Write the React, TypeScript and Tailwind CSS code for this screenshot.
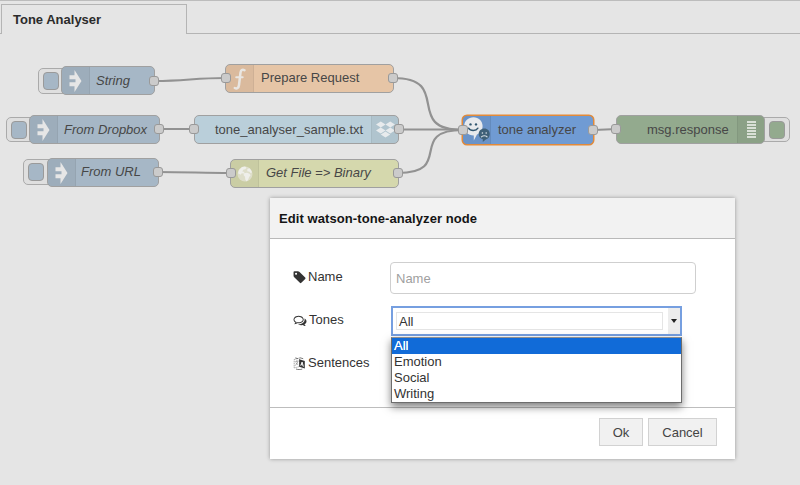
import React from "react";
import { FaDropbox } from "react-icons/fa";

type Box = { x: number; y: number; w: number; h: number };

function Port({ x, y }: { x: number; y: number }) {
  return (
    <div
      className="absolute size-[10px] rounded-[3px] border border-[#999999] bg-[#cbcbcb]"
      style={{ left: x - 5, top: y - 5 }}
    />
  );
}

function NodeButton({ x, y, w, h, color, right }: Box & { color: string; right?: boolean }) {
  return (
    <div
      className={`absolute flex items-center rounded-[5px] border border-[#aaaaaa] bg-[#dfdfdf] ${right ? "justify-end pr-1" : "justify-start pl-[3.5px]"}`}
      style={{ left: x, top: y, width: w, height: h }}
    >
      <div className={`h-[18px] w-4 rounded-[4px] border border-[#9a9a9a] ${color}`} />
    </div>
  );
}

function FlowNode({
  x, y, w, h, color, border = "border-[#a0a0a0]", icon, iconRight, label, labelX, labelClass = "h-[27px]",
}: Box & {
  color: string;
  border?: string;
  icon: React.ReactNode;
  iconRight?: boolean;
  label: string;
  labelX: number;
  labelClass?: string;
}) {
  return (
    <div
      className={`absolute flex overflow-hidden rounded-[5px] border ${color} ${border} ${iconRight ? "flex-row-reverse" : ""}`}
      style={{ left: x, top: y, width: w, height: h }}
    >
      <div
        className={`flex h-full shrink-0 items-center justify-center bg-black/5 ${iconRight ? "w-[27px] border-l" : "w-7 border-r"} border-black/5`}
      >
        {icon}
      </div>
      <span
        className={`absolute top-0 flex items-center whitespace-nowrap text-[13px] text-[#474747] ${labelClass}`}
        style={{ left: labelX - x - 1 }}
      >
        {label}
      </span>
    </div>
  );
}

function InjectIcon() {
  return (
    <svg width="13" height="22" viewBox="0 0 13 22" fill="#e6e6e6">
      <path d="M5.500 0 12.500 11 5.500 22V16.300H.5V12.300H6.500V9.300H.5V5.300H5.500z" />
    </svg>
  );
}

function FunctionIcon() {
  return (
    <svg width="14" height="22" viewBox="0 0 14 22" fill="none" stroke="#e9e6e2" strokeWidth="2.5" strokeLinecap="round">
      <path d="M11.500 2.200C9.400.9 7.900 2 7.500 4.600L6 17c-.4 3-2 4.100-4.200 3" />
      <path d="M3.200 9.300h6.500" strokeWidth="2" />
    </svg>
  );
}

function GlobeIcon() {
  return (
    <svg width="16" height="16" viewBox="0 0 16 16">
      <circle cx="8" cy="8" r="7.5" fill="#dedeca" />
      <path d="m2 4 3-3 3-.5 1.6 1.2-1.4 1.6-2 .4-.8 1.8 2 .4-.5 1.5-2.2-.2-1 1.6L1 7.2zM7 7.2l3-.5 2.5 1.1 1.1 1.5-1.4 1.6-1 2.5-1.5 2-1.4-2-.3-2.6L6.5 9zM10.4 3l2-.7 1.7 2 .9 2.3-1.5.5-1-1.4-2.3-.5z" fill="#efefea" />
    </svg>
  );
}

function ToneIcon() {
  return (
    <svg width="27" height="28" viewBox="0 0 27 28">
      <path d="M10.500 1.200c5.100 0 9.100 3.700 9.100 8.800 0 4.200-2.600 7.200-5.600 8.500L10.800 24.600v-5C5 19.500 1.200 15.200 1.200 10c0-5.100 4.200-8.800 9.300-8.800z" fill="#e8eaed" />
      <circle cx="7.500" cy="8.400" r="1.200" fill="#31566f" />
      <circle cx="13" cy="8.400" r="1.200" fill="#31566f" />
      <path d="M5.600 12.200c1.700 3 7.600 3 9.300 0" fill="none" stroke="#31566f" strokeWidth="1.400" strokeLinecap="round" />
      <path d="M21.300 12.500c3.200 0 5.500 2.300 5.500 5.400 0 2.900-1.800 5-4 5.500l-3 2.700v-2.900c-2.600-.7-4.100-2.800-4.100-5.300 0-3.100 2.400-5.400 5.600-5.400z" fill="#3f6078" />
      <circle cx="19.400" cy="17" r=".8" fill="#dce3e8" />
      <circle cx="23.200" cy="17" r=".8" fill="#dce3e8" />
      <path d="M18.200 21.300c1-2.100 5.200-2.100 6.200 0" fill="none" stroke="#dce3e8" strokeWidth="1.200" />
    </svg>
  );
}

function DebugIcon() {
  return (
    <div className="flex flex-col gap-px">
      <div className="h-[2px] w-[9px] bg-[#d9e0d6]" />
      <div className="h-[2px] w-[9px] bg-[#d9e0d6]" />
      <div className="h-[2px] w-[9px] bg-[#d9e0d6]" />
      <div className="h-[2px] w-[9px] bg-[#d9e0d6]" />
      <div className="h-[2px] w-[9px] bg-[#d9e0d6]" />
      <div className="h-[2px] w-[9px] bg-[#d9e0d6]" />
    </div>
  );
}

function TagIcon() {
  return (
    <svg width="13" height="13" viewBox="60 100 1650 1650" fill="#333">
      <path d="M576 448q0-53-37.500-90.500t-90.500-37.500-90.500 37.500-37.500 90.500 37.500 90.500 90.500 37.500 90.500-37.500 37.500-90.500zm1067 576q0 53-37 90l-491 492q-39 37-91 37-53 0-90-37l-715-716q-38-37-64.500-101t-26.500-117v-416q0-52 38-90t90-38h416q53 0 117 26.500t102 64.500l715 714q37 39 37 91z" />
    </svg>
  );
}

function CommentsIcon() {
  return (
    <svg width="14" height="13" viewBox="0 0 1792 1792" fill="#333">
      <path d="M704 384q-153 0-286 52t-211.500 141-78.500 191q0 82 53 158t149 132l97 56-35 84q34-20 62-39l44-31 53 10q78 14 153 14 153 0 286-52t211.500-141 78.500-191-78.500-191-211.500-141-286-52zm0-128q191 0 353.500 68.500t256.500 186.500 94 257-94 257-256.500 186.500-353.500 68.500q-86 0-176-16-124 88-278 128-36 9-86 16h-3q-11 0-20.500-8t-11.500-21q-1-3-1-6.500t.5-6.500 2-6l2.500-5 3.500-5.500 4-5 4.500-5 4-4.500q5-6 23-25t26-29.500 22.500-29 25-38.500 20.500-44q-124-72-195-177t-71-224q0-139 94-257t256.500-186.500 353.500-68.500zm822 1169q10 24 20.500 44t25 38.500 22.500 29 26 29.500 23 25q1 1 4 4.500t4.500 5 4 5 3.500 5.500l2.500 5 2 6 .5 6.500-1 6.500q-3 14-13 22t-22 7q-50-7-86-16-154-40-278-128-90 16-176 16-271 0-472-132 58 4 88 4 161 0 309-45t264-129q125-92 192-212t67-254q0-77-23-152 129 71 204 178t75 230q0 120-71 224.500t-195 176.500z" />
    </svg>
  );
}

function LanguageIcon() {
  return (
    <svg width="13" height="13" viewBox="0 0 12 13" fill="none">
      <path d="M.7 2.500 6 1v8.500L.7 11z" stroke="#888" strokeWidth=".7" strokeDasharray="1.500 .6" />
      <path d="M1.700 4.800 5 3.900M3.300 3.300v1M4.500 4.500 2 8.500M2.300 5.800l2.400 2" stroke="#888" strokeWidth=".7" />
      <path d="m5.700 2.200 5.600 1.700v7.600l-5.600-1.800z" fill="#333" />
      <path d="M7.200 8.700 8.600 5l1.300 4.700M7.600 7.500l1.900.6" stroke="#fff" strokeWidth=".9" />
      <path d="M1.800.9 4.500 1.700M6.200.7l3.500 1M2.500 12c2 .8 4.200.8 6.300 0" stroke="#555" strokeWidth=".8" />
    </svg>
  );
}

function Canvas() {
  return (
    <div className="relative min-h-0 flex-1">
      {/* Node coordinates are measured from the top of the editor window */}
      <div className="absolute -top-[34px] left-0 h-[485px] w-[800px]">
        <svg className="absolute inset-0" width="800" height="485" fill="none" stroke="#929292" strokeWidth="2.2">
          <path d="M155 81C185 81 195 78 225 78" />
          <path d="M160 129H194" />
          <path d="M158 172C185 172 205 173 230 173" />
          <path d="M393 78C454 78 402 130 463 130" />
          <path d="M399 129.500H463" />
          <path d="M398 173C455 173 406 130 463 130" />
          <path d="M594 130L617 129" />
        </svg>

        <NodeButton x={38} y={68} w={40} h={26} color="bg-[#a6b7c6]" />
        <FlowNode x={61} y={66} w={94} h={29} color="bg-[#a6b7c6]" icon={<InjectIcon />} label="String" labelX={96} labelClass="h-[27px] italic" />
        <Port x={154} y={81} />

        <NodeButton x={6} y={117} w={40} h={25} color="bg-[#a6b7c6]" />
        <FlowNode x={29} y={115} w={131} h={29} color="bg-[#a6b7c6]" icon={<InjectIcon />} label="From Dropbox" labelX={64} labelClass="h-[27px] italic" />
        <Port x={159} y={129} />

        <NodeButton x={23} y={159} w={40} h={26} color="bg-[#a6b7c6]" />
        <FlowNode x={47} y={158} w={112} h={29} color="bg-[#a6b7c6]" icon={<InjectIcon />} label="From URL" labelX={81} labelClass="h-[25px] italic" />
        <Port x={158} y={172} />

        <FlowNode x={225} y={64} w={169} h={29} color="bg-[#e6c5a6]" icon={<FunctionIcon />} label="Prepare Request" labelX={261} labelClass="h-[25px]" />
        <Port x={226} y={78} />
        <Port x={393} y={78} />

        <FlowNode x={194} y={115} w={205} h={29} color="bg-[#bacfda]" icon={<FaDropbox size={19} color="#e8ebed" />} iconRight label="tone_analyser_sample.txt" labelX={215} />
        <Port x={194} y={129} />
        <Port x={399} y={129} />

        <FlowNode x={230} y={159} w={169} h={29} color="bg-[#d5d8ad]" icon={<GlobeIcon />} label="Get File => Binary" labelX={266} labelClass="h-[25px] italic" />
        <Port x={231} y={173} />
        <Port x={398} y={173} />

        <FlowNode x={462} y={115} w={132} h={30} color="bg-[#709bd3]" border="border-[#e38a38] shadow-[0_0_0_0.5px_#e38a38]" icon={<ToneIcon />} label="tone analyzer" labelX={498} />
        <Port x={463} y={130} />
        <Port x={593} y={130} />

        <NodeButton x={749} y={117} w={41} h={25} color="bg-[#93aa8e]" right />
        <FlowNode x={616} y={115} w={149} h={29} color="bg-[#93aa8e]" icon={<DebugIcon />} iconRight label="msg.response" labelX={647} />
        <Port x={616} y={129} />
      </div>
    </div>
  );
}

function Field({ icon, label, children }: { icon: React.ReactNode; label: string; children?: React.ReactNode }) {
  return (
    <div className="flex h-8 items-center">
      <div className="flex w-[97px] shrink-0 items-center gap-[2px] pb-[2px] text-[13px] text-[#333]">
        {icon}
        <span className="whitespace-nowrap">{label}</span>
      </div>
      {children}
    </div>
  );
}

function TonesSelect() {
  return (
    <div className="relative ml-px w-[291px]">
      <div className="flex h-[30px] border-2 border-[#769fe0] bg-white">
        <div className="my-1 ml-[3px] flex w-[267px] items-center border border-[#e5e5e5] pl-[2px] pt-px text-[13px] text-[#333]">All</div>
        <div className="ml-auto flex w-3 items-center justify-center bg-[#ededed]">
          <svg width="6" height="4" viewBox="0 0 6 4"><path d="M0 0h6L3 4z" fill="#222" /></svg>
        </div>
      </div>
      <div className="absolute left-0 top-[31px] z-10 w-full border border-[#6d6d6d] border-t-[#8f8f8f] bg-white text-[13px] leading-4 text-[#333] shadow-[0_4px_8px_rgba(0,0,0,0.5)]">
        <div className="h-4 bg-[#116bd8] pl-[2px] text-white [text-shadow:0_0_0.5px_#fff]">All</div>
        <div className="h-4 pl-[2px]">Emotion</div>
        <div className="h-4 pl-[2px]">Social</div>
        <div className="h-4 pl-[2px]">Writing</div>
      </div>
    </div>
  );
}

function EditDialog() {
  return (
    <div className="absolute left-[270px] top-[198px] flex h-[261px] w-[465px] flex-col bg-white shadow-[0_0_4px_rgba(0,0,0,0.35)]">
      <div className="flex h-[41px] items-center border-b border-[#b9b9b9] bg-[#f2f2f2] pl-[9px] pt-px text-[13px] font-bold tracking-[0.08px] text-[#151515]">
        Edit watson-tone-analyzer node
      </div>
      <div className="flex h-[169px] flex-col gap-[11px] border-b border-[#bdbdbd] pl-[23px] pt-[23px]">
        <Field icon={<TagIcon />} label="Name">
          <input
            placeholder="Name"
            className="h-8 w-[306px] rounded-[4px] border border-[#cfcfcf] bg-white px-[5px] pt-px text-[13px] text-[#333] placeholder:text-[#a0a0a0]"
          />
        </Field>
        <Field icon={<CommentsIcon />} label="Tones">
          <TonesSelect />
        </Field>
        <Field icon={<LanguageIcon />} label="Sentences" />
      </div>
      <div className="flex flex-1 items-start justify-end gap-[5px] pr-[18px] pt-[10px] text-[13px] text-[#444]">
        <button className="h-[28px] w-[44px] border border-[#d2d2d2] bg-[#f1f1f1] pt-px">Ok</button>
        <button className="h-[28px] w-[69px] border border-[#d2d2d2] bg-[#f1f1f1] pt-px">Cancel</button>
      </div>
    </div>
  );
}

export default function App() {
  return (
    <div className="relative flex h-[485px] w-[800px] flex-col overflow-hidden bg-[#e5e5e5] font-['Liberation_Sans',Arial,sans-serif]">
      <div className="flex h-[34px] shrink-0 items-end border-t border-[#bcbcbc]">
        <div className="h-px w-px bg-[#b4b4b4]" />
        <div className="flex h-[30px] w-[186px] items-center border border-b-0 border-[#b4b4b4] pl-[11px] text-[13px] font-bold text-[#2b2b2b]">
          Tone Analyser
        </div>
        <div className="h-px flex-1 bg-[#b4b4b4]" />
      </div>
      <Canvas />
      <EditDialog />
    </div>
  );
}
